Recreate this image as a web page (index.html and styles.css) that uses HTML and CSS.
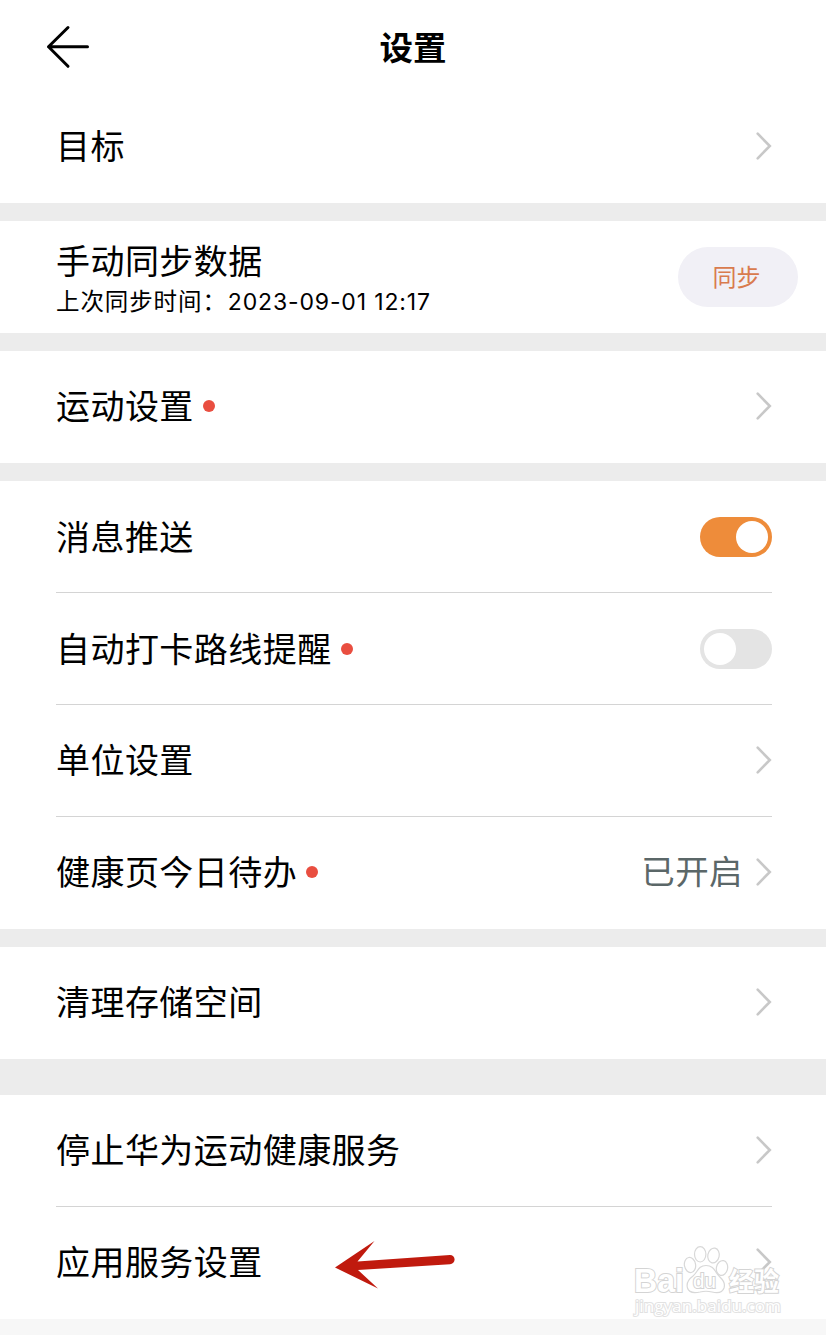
FILE: index.html
```
<!DOCTYPE html>
<html lang="zh-CN">

<head>
	<meta charset="utf-8">
	<title>设置</title>
	<meta name="viewport" content="width=device-width,initial-scale=1.0">
	<link rel="stylesheet" href="styles.css">
</head>

<body>
	<svg class="symbols">
		<symbol id="chevron" viewBox="0 0 16 28">
			<path d="M1.7 1.7 13.8 14 1.7 26.3" fill="none" stroke="#c8c8c8" stroke-width="2.6" stroke-linecap="round" stroke-linejoin="miter"/>
		</symbol>
	</svg>

	<header class="topbar">
		<svg class="back" viewBox="0 0 44 44">
			<path d="M23 2.500 3.500 21.800 23 41.300M3.500 21.800H42.500" fill="none" stroke="#000" stroke-width="3" stroke-linecap="round" stroke-linejoin="round"/>
		</svg>
		<h1>设置</h1>
	</header>

	<main>
		<section class="group">
			<div class="row"><span class="label">目标</span><svg class="chevron"><use href="#chevron"/></svg></div>
		</section>

		<section class="group">
			<div class="row sync">
				<div class="sync_text">
					<div class="label">手动同步数据</div>
					<div class="sub">上次同步时间：<span class="date">2023-09-01 12:17</span></div>
				</div>
				<button class="sync_button">同步</button>
			</div>
		</section>

		<section class="group">
			<div class="row"><span class="label dot">运动设置</span><svg class="chevron"><use href="#chevron"/></svg></div>
		</section>

		<section class="group">
			<div class="row switch"><span class="label">消息推送</span><span class="toggle on"></span></div>
			<div class="row switch"><span class="label dot">自动打卡路线提醒</span><span class="toggle"></span></div>
			<div class="row"><span class="label">单位设置</span><svg class="chevron"><use href="#chevron"/></svg></div>
			<div class="row"><span class="label dot">健康页今日待办</span><span class="value">已开启</span><svg class="chevron"><use href="#chevron"/></svg></div>
		</section>

		<section class="group">
			<div class="row"><span class="label">清理存储空间</span><svg class="chevron"><use href="#chevron"/></svg></div>
		</section>

		<section class="group last">
			<div class="row"><span class="label">停止华为运动健康服务</span><svg class="chevron"><use href="#chevron"/></svg></div>
			<div class="row">
				<span class="label">应用服务设置</span><svg class="chevron"><use href="#chevron"/></svg>
				<svg class="pointer" viewBox="0 0 120 48">
					<path d="M0 26.500 39.500 0 22.500 20.500 115 14A4.600 4.600 0 0 1 115 23.200L23 29 43 47.500Z" fill="#c01a0e"/>
				</svg>
				<svg class="watermark" viewBox="0 0 152 76">
					<g class="paw">
						<ellipse cx="58" cy="24" rx="5.600" ry="7.600" transform="rotate(-10 58 24)"/>
						<ellipse cx="68.200" cy="13.300" rx="5.700" ry="7.700"/>
						<ellipse cx="81.500" cy="14.500" rx="5.700" ry="7.500" transform="rotate(12 81.500 14.500)"/>
						<ellipse cx="90" cy="27" rx="5.600" ry="7.500" transform="rotate(12 90 27)"/>
						<path d="M74 24.500C82 24.500 83 31 87 35C91 39 93.500 42 92 47C90 53 84 52 80 51C76 50 72 50 68 51C63 52 57 52.500 55.500 47C54 42 57 38 61 35C66 31 66 24.500 74 24.500Z"/>
					</g>
					<g class="mark_text">
						<text x="2" y="50.500" font-size="33" textLength="50" lengthAdjust="spacingAndGlyphs">Bai</text>
						<text class="du" x="61" y="47" font-size="20" textLength="23" lengthAdjust="spacingAndGlyphs">du</text>
						<text x="97" y="50" font-size="26" textLength="50" lengthAdjust="spacingAndGlyphs">经验</text>
						<text class="url" x="3" y="71" font-size="16" textLength="146" lengthAdjust="spacingAndGlyphs">jingyan.baidu.com</text>
					</g>
				</svg>
			</div>
		</section>
	</main>
</body>

</html>
```
FILE: styles.css
```
* {
	box-sizing: border-box;
}
body {
	margin: 0;
	color: #000;
	background: #f7f7f7;
	font-family: "Noto Sans CJK SC", sans-serif;
}
.symbols {
	display: none;
}
.topbar {
	display: grid;
	grid-template-columns: 44px 1fr 44px;
	align-items: center;
	height: 91px;
	padding: 3px 45px 0;
	background: #fff;
}
.back {
	width: 44px;
	height: 44px;
}
h1 {
	margin: 0;
	padding-bottom: 3px;
	font-size: 33.500px;
	font-weight: 700;
	line-height: 44px;
	text-align: center;
}
main {
	background: #ececec;
}
.group {
	margin-bottom: 18px;
	padding: 0 54px 0 56px;
	background: #fff;
}
.group:nth-child(5) {
	margin-bottom: 36px;
}
.last {
	margin-bottom: 0;
}
.row {
	position: relative;
	display: flex;
	align-items: center;
	height: 112px;
	border-bottom: 1px solid #d4d4d4;
}
.row:last-child {
	border-color: transparent;
}
.label {
	font-size: 34px;
	line-height: 46px;
	letter-spacing: 0.45px;
	margin-right: auto;
	margin-bottom: 3px;
}
.switch .label {
	margin-bottom: 1px;
}
.dot {
	display: flex;
	align-items: center;
}
.dot::after {
	content: "";
	width: 12px;
	height: 12px;
	margin: 2px 0 0 9px;
	border-radius: 50%;
	background: #e94e40;
}
.chevron {
	width: 16px;
	height: 28px;
	margin-bottom: 1px;
}
.value {
	margin: 0 13px 5px 0;
	color: #5b6768;
	font-size: 33.500px;
	letter-spacing: 0.4px;
	line-height: 46px;
}
.sync {
	margin-right: -26px;
}
.sync_text {
	margin-right: auto;
	padding-top: 3px;
}
.sync_text .label {
	margin-bottom: -1px;
}
.sub {
	padding-top: 1px;
	font-size: 23.500px;
	line-height: 34px;
	letter-spacing: 0.9px;
}
.date {
	margin-left: 1px;
	font-family: Inter, sans-serif;
	font-size: 23px;
	letter-spacing: 0.85px;
}
.sync_button {
	width: 120px;
	height: 60px;
	padding: 0 3px 3px 0;
	border: 0;
	border-radius: 30px;
	color: #d97b4e;
	background: #f1f0f6;
	font: 24px "Noto Sans CJK SC", sans-serif;
}
.toggle {
	width: 72px;
	height: 40px;
	padding: 4px;
	border-radius: 20px;
	background: #e4e4e4;
}
.toggle::before {
	content: "";
	display: block;
	width: 32px;
	height: 32px;
	border-radius: 50%;
	background: #fff;
}
.on {
	background: #ee8c3a;
}
.on::before {
	margin-left: auto;
}
/* hand drawn arrow over the last row */
.pointer {
	position: absolute;
	left: 279px;
	top: 34px;
	width: 120px;
	height: 48px;
}
.watermark {
	position: absolute;
	right: -12px;
	top: 34px;
	width: 152px;
	height: 76px;
}
.paw {
	fill: #fff;
	fill-opacity: 0.5;
	stroke: #d8d8d8;
	stroke-width: 1.2px;
}
.mark_text {
	fill: #fff;
	stroke: #d4d4d4;
	stroke-width: 2px;
	paint-order: stroke;
	font-family: "Liberation Sans", "Noto Sans CJK SC", sans-serif;
	font-weight: 700;
}
.du {
	font-weight: 400;
}
.url {
	font-family: "Open Sans", sans-serif;
	font-weight: 400;
	stroke: #e2e2e2;
}
```
